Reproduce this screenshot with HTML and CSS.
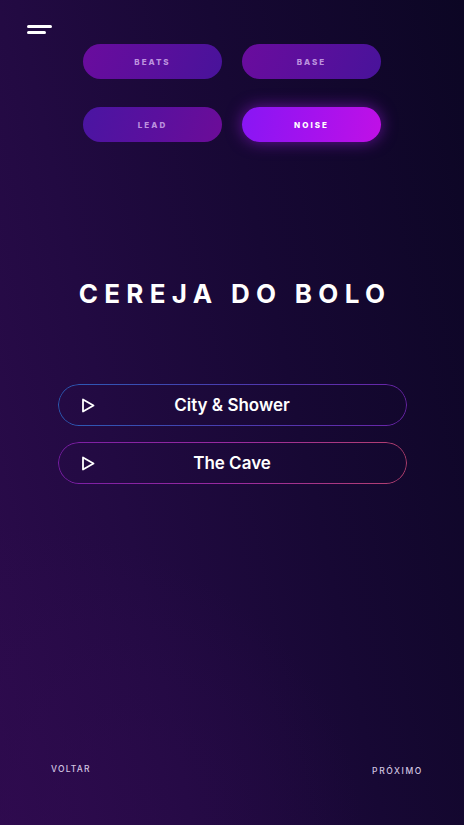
FILE: index.html
```html
<!DOCTYPE html>
<html lang="pt">
<head>
<meta charset="utf-8">
<link rel="stylesheet" href="styles.css">
</head>
<body>
<div class="screen">
  <header class="top">
    <button class="menu" aria-label="menu">
      <span class="line long"></span>
      <span class="line short"></span>
    </button>
  </header>
  <div class="pills">
    <button class="pill pill-a">BEATS</button>
    <button class="pill pill-a">BASE</button>
    <button class="pill pill-b">LEAD</button>
    <button class="pill pill-active">NOISE</button>
  </div>
  <h1 class="title">CEREJA DO BOLO</h1>
  <div class="tracks">
    <button class="track track-blue">
      <svg class="play" width="14" height="15" viewBox="0 0 14 15"><path d="M2 1.5 L12.5 7.5 L2 13.5 Z" fill="none" stroke="#fff" stroke-width="1.8" stroke-linejoin="round"/></svg>
      <span class="track-name">City &amp; Shower</span>
    </button>
    <button class="track track-pink">
      <svg class="play" width="14" height="15" viewBox="0 0 14 15"><path d="M2 1.5 L12.5 7.5 L2 13.5 Z" fill="none" stroke="#fff" stroke-width="1.8" stroke-linejoin="round"/></svg>
      <span class="track-name">The Cave</span>
    </button>
  </div>
  <footer class="nav">
    <span class="nav-link back">VOLTAR</span>
    <span class="nav-link next">PRÓXIMO</span>
  </footer>
</div>
</body>
</html>
```
FILE: styles.css
```css
* { box-sizing: border-box; }
html, body { margin: 0; padding: 0; }
body {
  width: 464px;
  height: 825px;
  overflow: hidden;
  font-family: "Inter", "Open Sans", sans-serif;
  background: #140828;
}
.screen {
  width: 464px;
  height: 825px;
  display: flex;
  flex-direction: column;
  background:
    radial-gradient(ellipse 360px 300px at 0% 100%, rgba(48, 10, 80, 0.6), rgba(48, 10, 80, 0) 100%),
    linear-gradient(78deg, #2c0b4c 0%, #220a42 30%, #170834 60%, #0c0624 100%);
}
.top {
  padding: 25px 0 0 27px;
  height: 44px;
}
.menu {
  background: none;
  border: 0;
  padding: 0;
  display: flex;
  flex-direction: column;
  gap: 3px;
  cursor: pointer;
}
.line {
  display: block;
  height: 3px;
  border-radius: 2px;
  background: #fff;
}
.line.long { width: 25px; }
.line.short { width: 19px; }
.pills {
  display: grid;
  grid-template-columns: 139px 139px;
  column-gap: 20px;
  row-gap: 28px;
  justify-content: center;
}
.pill {
  height: 35px;
  border: 0;
  border-radius: 18px;
  font-family: inherit;
  font-size: 8px;
  font-weight: 800;
  letter-spacing: 2px;
  color: rgba(214, 182, 240, 0.8);
  padding: 0;
  cursor: pointer;
}
.pill-a { background: linear-gradient(110deg, #6a0c9e 0%, #5a0f9c 50%, #48139a 100%); }
.pill-b { background: linear-gradient(110deg, #4a15a2 0%, #5a109e 50%, #6c0c98 100%); }
.pill-active {
  background: linear-gradient(100deg, #8816f4 0%, #a412ee 50%, #c010e6 100%);
  color: #fff;
  box-shadow: 0 0 16px rgba(170, 30, 240, 0.55);
}
.title {
  margin: 136px 0 0;
  text-align: center;
  color: #fff;
  font-size: 26px;
  font-weight: 700;
  letter-spacing: 6.3px;
  line-height: 32px;
  padding-left: 6px;
}
.tracks {
  margin: 74px auto 0;
  width: 349px;
  display: flex;
  flex-direction: column;
  gap: 16px;
}
.track {
  position: relative;
  height: 42px;
  border: 0;
  border-radius: 21px;
  background: transparent;
  display: flex;
  align-items: center;
  padding: 0 0 0 23px;
  font-family: inherit;
  cursor: pointer;
}
.track::before {
  content: "";
  position: absolute;
  inset: 0;
  border-radius: 21px;
  padding: 1px;
  -webkit-mask: linear-gradient(#000 0 0) content-box, linear-gradient(#000 0 0);
  -webkit-mask-composite: xor;
  mask-composite: exclude;
}
.track-blue::before { background: linear-gradient(90deg, #2a5cb4 0%, #4a3cb0 50%, #6a24a8 100%); }
.track-pink::before { background: linear-gradient(90deg, #7a1ea6 0%, #9a2aa0 50%, #b4406e 100%); }
.play { flex: none; }
.track-name {
  flex: 1;
  text-align: center;
  color: #fff;
  font-size: 17px;
  font-weight: 600;
  padding-right: 37px;
}
.nav {
  margin-top: auto;
  height: 61px;
  display: flex;
  justify-content: space-between;
  align-items: flex-start;
  padding: 0 41px 0 51px;
}
.nav-link {
  color: #d2c4e0;
  font-size: 8.5px;
  font-weight: 500;
  letter-spacing: 1.2px;
}
.next { margin-top: 2px; letter-spacing: 1.6px; }
```
